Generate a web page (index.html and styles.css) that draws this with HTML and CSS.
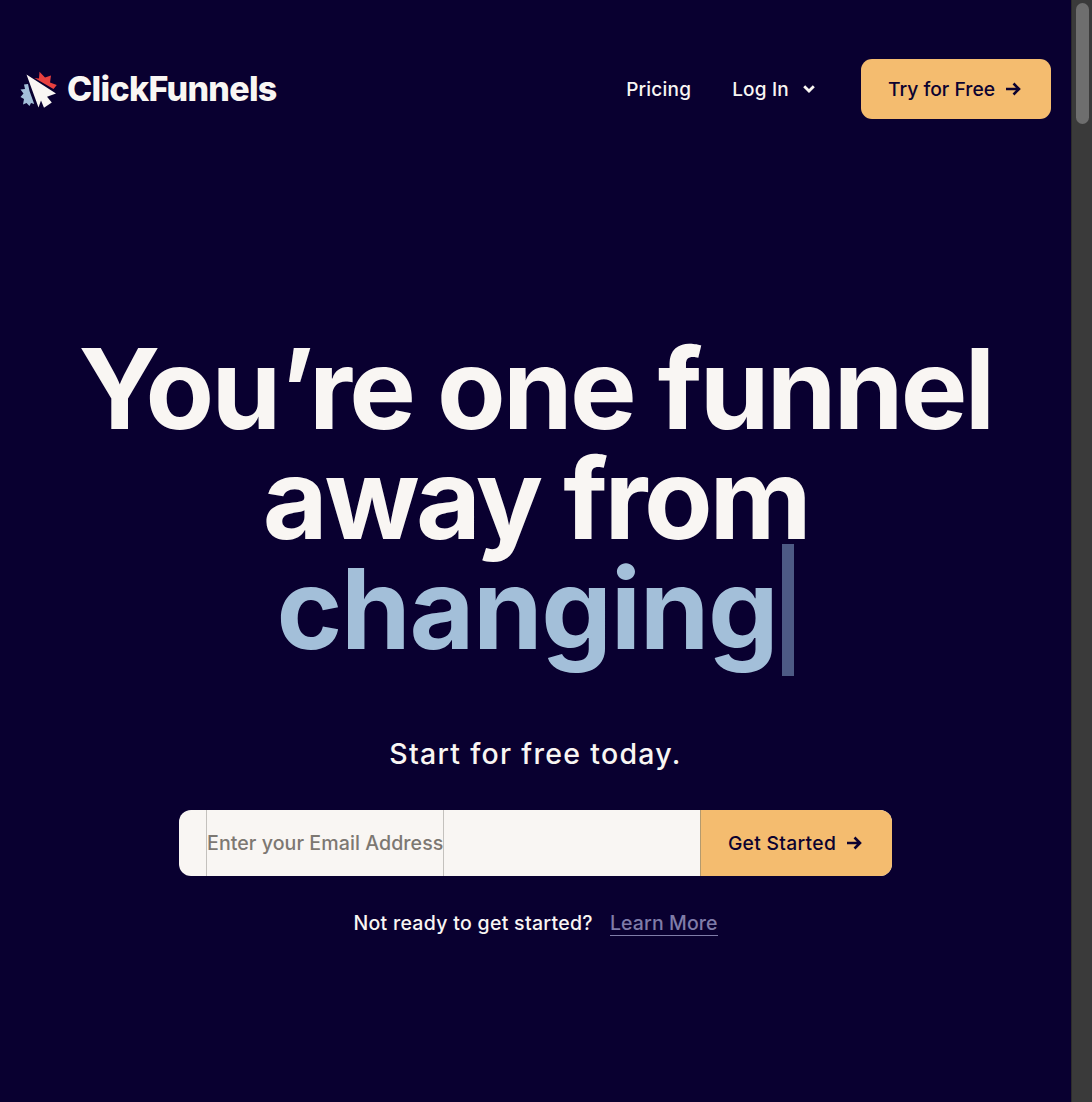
FILE: index.html
```html
<!DOCTYPE html>
<html lang="en">
<head>
<meta charset="utf-8">
<title>ClickFunnels</title>
<link rel="stylesheet" href="styles.css">
</head>
<body>
<div class="page">
  <main class="main">
    <header class="header">
      <a class="logo" href="#">
        <svg class="logo-icon" viewBox="20 70 38 37" width="38" height="37" aria-hidden="true">
          <path fill="#e8403f" d="M34.500 77 39 77.500 39.500 70.800 45 76.500 51 74.500 50 81.500 56.800 84 53.500 88z"/>
          <path fill="#a3bfd9" d="M28 83 29.500 90 34.200 103 31 102 29.500 105 26.500 102 23 103.500 24 98 20.500 96 23.500 92.500 20.500 88.500 25 88 24 83.500z"/>
          <path fill="#f9f6f3" d="M26.500 73.500 56 92.500 47 95.800 51.800 101.500 44 106.800 41 99.500 38.500 106.500z"/>
        </svg>
        <span class="logo-text">ClickFunnels</span>
      </a>
      <nav class="nav">
        <a class="nav-link" href="#">Pricing</a>
        <a class="nav-link login" href="#">Log In
          <svg class="chev" viewBox="0 0 12 8" width="12" height="8" aria-hidden="true"><path d="M1.200 1.200 6 6l4.800-4.800" fill="none" stroke="currentColor" stroke-width="2.800"/></svg>
        </a>
        <a class="btn try" href="#">Try for Free
          <svg class="arrow" viewBox="0 0 16 14" width="16" height="14" aria-hidden="true"><path d="M1 7h13M8.500 1.500 14 7l-5.500 5.500" fill="none" stroke="currentColor" stroke-width="2.600"/></svg>
        </a>
      </nav>
    </header>
    <section class="hero">
      <h1 class="headline">You’re one funnel<br><span class="middle">away from</span><br><span class="accent">changing</span><span class="caret"></span></h1>
      <p class="sub">Start for free today.</p>
      <form class="form">
        <div class="field"><span class="placeholder">Enter your Email Address</span></div>
        <button class="btn started" type="button">Get Started
          <svg class="arrow" viewBox="0 0 16 14" width="16" height="14" aria-hidden="true"><path d="M1 7h13M8.500 1.500 14 7l-5.500 5.500" fill="none" stroke="currentColor" stroke-width="2.600"/></svg>
        </button>
      </form>
      <p class="more"><span class="more-text">Not ready to get started?</span><a class="learn" href="#">Learn More</a></p>
    </section>
  </main>
  <div class="scrollbar"><div class="thumb"></div></div>
</div>
</body>
</html>
```
FILE: styles.css
```css
* { box-sizing: border-box; }
html, body { margin: 0; height: 100%; overflow: hidden; }
body { background: #090030; color: #f9f6f3; font-family: "Inter", "Liberation Sans", sans-serif; }
a { color: inherit; text-decoration: none; }
.page { display: flex; height: 1102px; }
.main { flex: 1; min-width: 0; }
.scrollbar { width: 21px; background: #3a3a3a; border-left: 1px solid #2b2b2b; padding: 3px 3px 0 4px; }
.thumb { height: 121px; background: #6e6e6e; border-radius: 7px; }
.header { display: flex; align-items: center; justify-content: space-between; padding: 59px 20px 0 20px; height: 119px; }
.logo { display: flex; align-items: center; gap: 9px; }
.logo-icon { display: block; }
.logo-text { font-size: 34px; font-weight: 800; letter-spacing: -0.700px; color: #f9f6f3; line-height: 1; }
.nav { display: flex; align-items: center; }
.nav-link { font-size: 19px; letter-spacing: 0.2px; font-weight: 500; }
.login { display: flex; align-items: center; gap: 14px; margin-left: 41px; margin-right: 46px; }
.btn { display: flex; align-items: center; justify-content: center; gap: 10px; padding: 0 3px 0 0; background: #f4bc6f; color: #0c0230; font-family: inherit; font-size: 19.300px; font-weight: 500; border: 0; }
.try { width: 190px; height: 60px; border-radius: 11px; letter-spacing: 0; }
.hero { display: flex; flex-direction: column; align-items: center; padding-top: 214px; }
.headline { margin: 0; width: 100%; text-align: center; font-size: 112px; line-height: 110px; font-weight: 700; letter-spacing: -2.700px; color: #f9f6f3; }
.middle { letter-spacing: -3.300px; }
.accent { color: #a3bfd9; letter-spacing: -1.400px; }
.caret { display: inline-block; width: 12px; height: 132px; margin: -30px 0 -10px 5px; background: #4d5a85; vertical-align: -17px; }
.sub { margin: 68px 0 0; font-size: 28.500px; line-height: 40px; letter-spacing: 1.300px; font-weight: 500; }
.form { display: flex; width: 713px; height: 66px; margin-top: 36px; background: #f9f6f3; border-radius: 12px; overflow: hidden; }
.field { flex: 1; padding-left: 27px; display: flex; }
.placeholder { display: flex; align-items: center; color: #7d7872; font-size: 19.600px; font-weight: 500; letter-spacing: 0.060px; border-left: 1px solid #c4c1bd; border-right: 1px solid #c4c1bd; }
.started { width: 192px; border-left: 1px solid #b49a6e; letter-spacing: 0.300px; }
.more { margin: 27px 0 0; font-size: 19.500px; line-height: 40px; display: flex; gap: 17px; font-weight: 500; letter-spacing: 0.3px; }
.learn { color: #7f7ca8; border-bottom: 1px solid #7f7ca8; line-height: 24px; align-self: center; letter-spacing: 0.100px; }
```
